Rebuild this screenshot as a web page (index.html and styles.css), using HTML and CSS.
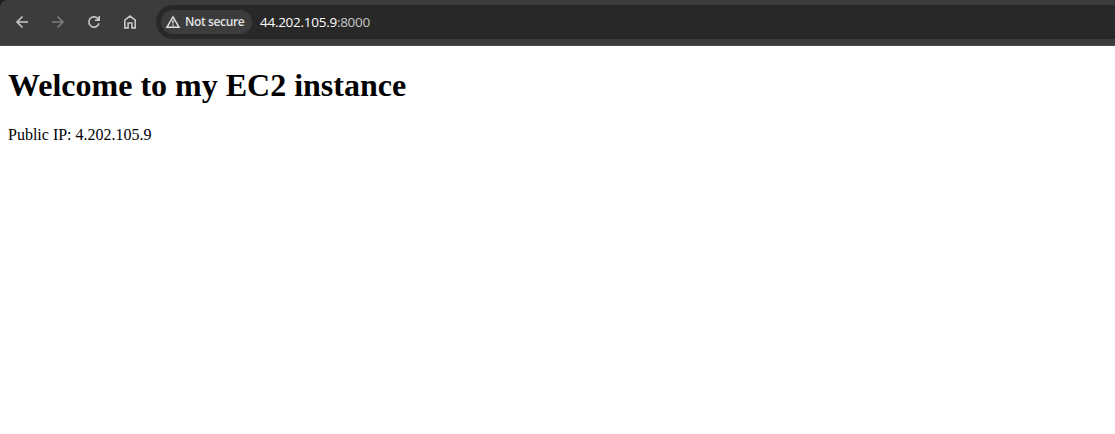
FILE: index.html
```html
<!DOCTYPE html>
<html lang="en">
<head>
<meta charset="utf-8">
<title>EC2 instance</title>
<link rel="stylesheet" href="styles.css">
</head>
<body>
<div class="frame">
<header class="toolbar">
  <nav class="nav">
    <svg class="icon" viewBox="0 0 16 16"><path d="M14 8H3M8.5 2.5L3 8L8.5 13.5"/></svg>
    <svg class="icon disabled" viewBox="0 0 16 16"><path d="M2 8H13M7.5 2.5L13 8L7.5 13.5"/></svg>
    <svg class="icon" viewBox="0 0 16 16"><path d="M12.9 9.2A5.1 5.1 0 1 1 12.2 5.2L13 6.2M13.2 2V6.3H9"/></svg>
    <svg class="icon" viewBox="0 0 16 16"><path d="M2.8 6.1L8 2.1L13.2 6.1V13.9H9.9V9H6.1V13.9H2.8Z"/></svg>
  </nav>
  <div class="address">
    <div class="chip">
      <svg class="warning" viewBox="0 0 16 16"><path d="M8 2.8L14.1 13.3H1.9Z"/><path d="M8 6.2V9.6M8 10.5V12"/></svg>
      <span class="chip-label">Not secure</span>
    </div>
    <div class="url">44.202.105.9<span class="port">:8000</span></div>
  </div>
</header>
</div>
<main class="page">
  <h1 class="title">Welcome to my EC2 instance</h1>
  <p class="ip">Public IP: 4.202.105.9</p>
</main>
</body>
</html>
```
FILE: styles.css
```css
body {
  margin: 0;
  background: #fff;
}
.frame {
  background: #202020;
}
.toolbar {
  box-sizing: border-box;
  display: flex;
  height: 46px;
  padding-top: 5px;
  background: #3c3c3c;
  border-bottom: 1px solid #4b4b4b;
  border-top-left-radius: 8px;
  font-family: "Open Sans", "Noto Sans", sans-serif;
}
.nav {
  display: flex;
  align-items: center;
  gap: 20px;
  box-sizing: border-box;
  width: 156px;
  height: 34px;
  padding-left: 14px;
}
.icon {
  width: 16px;
  height: 16px;
  flex: none;
  fill: none;
  stroke: #c7c7c7;
  stroke-width: 1.6;
}
.disabled {
  stroke: #7c7c7c;
}
.address {
  display: flex;
  align-items: center;
  flex: 1;
  box-sizing: border-box;
  height: 34px;
  padding-left: 5px;
  background: #282828;
  border-radius: 17px 0 0 17px;
}
.chip {
  display: flex;
  align-items: center;
  box-sizing: border-box;
  width: 91px;
  height: 24px;
  padding-left: 4px;
  gap: 4px;
  border-radius: 12px;
  background: #3c3c3c;
  color: #e3e3e3;
  font-size: 12px;
  font-weight: 600;
  letter-spacing: -0.37px;
  white-space: nowrap;
}
.chip-label {
  padding-bottom: 2px;
}
.warning {
  width: 16px;
  height: 16px;
  flex: none;
  fill: none;
  stroke: #e3e3e3;
  stroke-width: 1.4;
}
.url {
  margin-left: 8px;
  color: #fff;
  font-size: 13.5px;
  letter-spacing: -0.27px;
}
.port {
  color: #c7c7c7;
}
.page {
  padding: 0 8px;
  color: #000;
  font-family: "Liberation Serif", "Times New Roman", serif;
}
.title {
  margin: 0;
  padding-top: 21px;
  font-size: 32px;
  line-height: 37px;
}
.ip {
  margin: 22px 0 0;
  font-size: 16px;
  line-height: 18px;
}
```
